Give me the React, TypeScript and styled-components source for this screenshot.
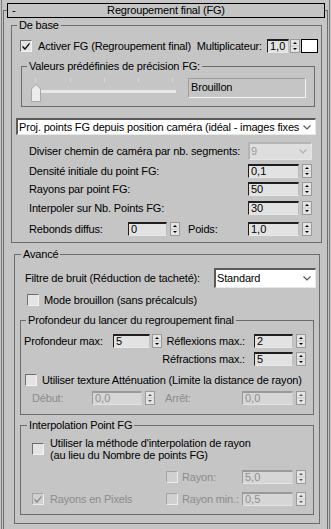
import React from "react";
import styled, { createGlobalStyle } from "styled-components";

const GlobalStyle = createGlobalStyle`
  html, body { margin: 0; padding: 0; background: #c5c5c5; }
  body { font-family: "Liberation Sans", Arial, sans-serif; font-size: 11px; letter-spacing: -0.17px; color: #000; }
  * { box-sizing: border-box; }
`;

const Screen = styled.div`
  width: 331px;
  height: 529px;
  background: #c5c5c5;
  padding: 0 1px;
  overflow: hidden;
`;

const Edge = styled.div`
  height: 100%;
  border-left: 1px solid #7c7c7c;
  border-right: 1px solid #7c7c7c;
  padding: 3px 1px 0;
`;

const Rollout = styled.div`
  height: calc(100% - 7px);
  margin-top: 7px;
  border: 1px solid #6c6c6c;
  border-bottom: none;
`;

const Header = styled.div`
  height: 15px;
  margin: -8px 2px 0 3px;
  border: 1px solid #000;
  background: #c5c5c5;
  display: grid;
  grid-template-columns: 20px 1fr 20px;
  align-items: center;
  line-height: 13px;
`;

const Minus = styled.span`
  padding-left: 4px;
`;

const Title = styled.span`
  text-align: center;
`;

const Group = styled.fieldset<{ $ml: number; $mr: number; $mt: number; $pb: number }>`
  margin: ${(p) => p.$mt}px ${(p) => p.$mr}px 0 ${(p) => p.$ml}px;
  padding: 0 0 ${(p) => p.$pb}px 0;
  border: 1px solid #6c6c6c;
  min-width: 0;
`;

const Legend = styled.legend<{ $ml: number }>`
  margin-left: ${(p) => p.$ml}px;
  padding: 0 2px;
  height: 13px;
  line-height: 13px;
`;

const Row = styled.div<{ $h: number; $mt: number; $pl?: number; $pr?: number }>`
  display: flex;
  align-items: center;
  height: ${(p) => p.$h}px;
  margin-top: ${(p) => p.$mt}px;
  padding-left: ${(p) => p.$pl ?? 0}px;
  padding-right: ${(p) => p.$pr ?? 0}px;
  white-space: nowrap;
`;

const Spacer = styled.div`
  flex: 1;
`;

const Label = styled.span<{ $w?: number; $ml?: number; $dim?: boolean; $right?: boolean; $grow?: boolean; $pr?: number }>`
  display: block;
  ${(p) => (p.$w ? `width: ${p.$w}px; flex: none;` : "")}
  ${(p) => (p.$grow ? "flex: 1;" : "")}
  margin-left: ${(p) => p.$ml ?? 0}px;
  padding-right: ${(p) => p.$pr ?? 0}px;
  color: ${(p) => (p.$dim ? "#8c8c8c" : "#000")};
  text-align: ${(p) => (p.$right ? "right" : "left")};
  line-height: 13px;
  overflow: hidden;
`;

const Field = styled.div<{ $w: number; $ml?: number; $dim?: boolean }>`
  width: ${(p) => p.$w}px;
  height: 14px;
  flex: none;
  margin-left: ${(p) => p.$ml ?? 0}px;
  background: ${(p) => (p.$dim ? "#d6d6d6" : "#e2e2e2")};
  border-style: solid;
  border-width: 2px 1px 1px 1px;
  border-color: ${(p) =>
    p.$dim ? "#9a9a9a #cfcfcf #e4e4e4 #9a9a9a" : "#1e1e1e #bdbdbd #e8e8e8 #1e1e1e"};
  color: ${(p) => (p.$dim ? "#8e8e8e" : "#000")};
  padding-left: 2px;
  line-height: 11px;
  font-size: 11px;
  letter-spacing: 0;
`;

const SpinBox = styled.div<{ $ml: number }>`
  width: 10px;
  height: 14px;
  flex: none;
  margin-left: ${(p) => p.$ml}px;
  display: flex;
`;

const Box = styled.div<{ $ml?: number; $dim?: boolean }>`
  width: 12px;
  height: 12px;
  flex: none;
  margin-left: ${(p) => p.$ml ?? 0}px;
  border: 1px solid;
  border-color: ${(p) => (p.$dim ? "#a4a4a4 #ececec #ececec #a4a4a4" : "#6e6e6e #f2f2f2 #f2f2f2 #6e6e6e")};
  background: ${(p) => (p.$dim ? "#d0d0d0" : "#e4e4e4")};
  display: flex;
  align-items: center;
  justify-content: center;
`;

const Swatch = styled.div`
  width: 17px;
  height: 14px;
  margin-left: 1px;
  flex: none;
  background: #fff;
  border: 1px solid #000;
`;

const Combo = styled.div<{ $w: number; $h: number; $ml?: number; $dim?: boolean }>`
  width: ${(p) => p.$w}px;
  height: ${(p) => p.$h}px;
  flex: none;
  margin-left: ${(p) => p.$ml ?? 0}px;
  display: flex;
  align-items: center;
  background: ${(p) => (p.$dim ? "#dedede" : "#fff")};
  border-style: solid;
  border-width: 2px 1px 1px 2px;
  border-color: ${(p) => (p.$dim ? "#b4b4b4 #e6e6e6 #e6e6e6 #b4b4b4" : "#5a5a5a #e8e8e8 #e8e8e8 #5a5a5a")};
  color: ${(p) => (p.$dim ? "#9a9a9a" : "#000")};
  padding-left: 1px;
  line-height: 13px;
`;

const ComboText = styled.span`
  flex: 1;
  overflow: hidden;
  white-space: nowrap;
`;

const Chevron = styled.svg`
  flex: none;
  margin: 0 4px 0 2px;
`;

const Static = styled.div`
  width: 118px;
  height: 20px;
  margin: 5px 0 0 11px;
  border-style: solid;
  border-width: 1px;
  border-color: #9e9e9e #f4f4f4 #f4f4f4 #9e9e9e;
  padding: 2px 0 0 2px;
  line-height: 13px;
`;

const PresetRow = styled.div`
  display: flex;
  align-items: flex-start;
  height: 33px;
`;

const Slider = styled.div`
  position: relative;
  width: 146px;
  height: 26px;
  margin: 3px 0 0 9px;
  flex: none;
`;

const Tick = styled.div`
  position: absolute;
  top: 2px;
  width: 1px;
  height: 4px;
  background: #dadada;
`;

const Track = styled.div`
  position: absolute;
  left: 5px;
  top: 14px;
  width: 140px;
  height: 3px;
  background: #e8e8e8;
`;

const Thumb = styled.svg`
  position: absolute;
  left: 0;
  top: 8px;
`;

const TwoLine = styled.div`
  margin-left: 6px;
  line-height: 12px;
`;

function Spinner({ ml = 3, dim = false }: { ml?: number; dim?: boolean }) {
  const c = dim ? "#5a5a5a" : "#000";
  return (
    <SpinBox $ml={ml}>
      <svg width="10" height="14" viewBox="0 0 10 14">
        <rect x="0.5" y="0.5" width="9" height="13" fill="#e4e4e4" stroke="#9a9a9a" />
        <line x1="1" y1="7" x2="9" y2="7" stroke="#c8c8c8" />
        <path d="M3 5 L5 3 L7 5 Z" fill={c} />
        <path d="M3 9 L7 9 L5 11 Z" fill={c} />
      </svg>
    </SpinBox>
  );
}

function Check({ checked = false, dim = false, ml }: { checked?: boolean; dim?: boolean; ml?: number }) {
  return (
    <Box $ml={ml} $dim={dim}>
      {checked && (
        <svg width="10" height="10" viewBox="0 0 10 10">
          <path d="M1.5 4.5 L4 7 L8.5 1.5 L8.5 3.5 L4 9 L1.5 6.5 Z" fill={dim ? "#8a8a8a" : "#000"} />
        </svg>
      )}
    </Box>
  );
}

function Chev({ dim = false }: { dim?: boolean }) {
  return (
    <Chevron width="8" height="5" viewBox="0 0 8 5">
      <path d="M0.5 0.5 L4 4 L7.5 0.5" fill="none" stroke={dim ? "#b0b0b0" : "#555"} strokeWidth="1.2" />
    </Chevron>
  );
}

export default function App() {
  return (
    <>
      <GlobalStyle />
      <Screen>
        <Edge>
          <Rollout>
            <Header>
              <Minus>-</Minus>
              <Title>Regroupement final (FG)</Title>
              <span />
            </Header>

            <Group $ml={7} $mr={5} $mt={1} $pb={6}>
              <Legend $ml={5}>De base</Legend>
              <Row $h={14} $mt={7} $pl={8} $pr={3}>
                <Check checked />
                <Label $ml={6}>Activer FG (Regroupement final)</Label>
                <Spacer />
                <Label>Multiplicateur:</Label>
                <Field $w={22} $ml={5}>1,0</Field>
                <Spinner ml={1} />
                <Swatch />
              </Row>

              <Group $ml={9} $mr={6} $mt={7} $pb={0}>
                <Legend $ml={5}>Valeurs prédéfinies de précision FG:</Legend>
                <PresetRow>
                  <Slider>
                    {[4, 39, 73, 107, 141].map((x) => (
                      <Tick key={x} style={{ left: x }} />
                    ))}
                    <Track />
                    <Thumb width="10" height="18" viewBox="0 0 10 18">
                      <path d="M5 0.5 L9.5 5 L9.5 17.5 L0.5 17.5 L0.5 5 Z" fill="#ececec" stroke="#a8a8a8" />
                    </Thumb>
                  </Slider>
                  <Static>Brouillon</Static>
                </PresetRow>
              </Group>

              <Row $h={17} $mt={11} $pl={4}>
                <Combo $w={300} $h={17}>
                  <ComboText>Proj. points FG depuis position caméra (idéal - images fixes</ComboText>
                  <Chev />
                </Combo>
              </Row>

              <Row $h={18} $mt={7} $pl={17} $pr={9}>
                <Label>Diviser chemin de caméra par nb. segments:</Label>
                <Spacer />
                <Combo $w={64} $h={18} $dim>
                  <ComboText>9</ComboText>
                  <Chev dim />
                </Combo>
              </Row>

              <Row $h={14} $mt={4} $pl={17} $pr={9}>
                <Label>Densité initiale du point FG:</Label>
                <Spacer />
                <Field $w={51}>0,1</Field>
                <Spinner />
              </Row>
              <Row $h={14} $mt={4} $pl={17} $pr={9}>
                <Label>Rayons par point FG:</Label>
                <Spacer />
                <Field $w={51}>50</Field>
                <Spinner />
              </Row>
              <Row $h={14} $mt={5} $pl={17} $pr={9}>
                <Label>Interpoler sur Nb. Points FG:</Label>
                <Spacer />
                <Field $w={51}>30</Field>
                <Spinner />
              </Row>
              <Row $h={14} $mt={7} $pl={17} $pr={9}>
                <Label $w={99}>Rebonds diffus:</Label>
                <Field $w={39}>0</Field>
                <Spinner />
                <Label $ml={8}>Poids:</Label>
                <Spacer />
                <Field $w={51}>1,0</Field>
                <Spinner />
              </Row>
            </Group>

            <Group $ml={10} $mr={7} $mt={5} $pb={8}>
              <Legend $ml={6}>Avancé</Legend>
              <Row $h={20} $mt={7} $pl={10} $pr={3}>
                <Label>Filtre de bruit (Réduction de tacheté):</Label>
                <Spacer />
                <Combo $w={102} $h={20}>
                  <ComboText>Standard</ComboText>
                  <Chev />
                </Combo>
              </Row>
              <Row $h={12} $mt={6} $pl={12}>
                <Check />
                <Label $ml={5}>Mode brouillon (sans précalculs)</Label>
              </Row>

              <Group $ml={5} $mr={5} $mt={8} $pb={9}>
                <Legend $ml={5}>Profondeur du lancer du regroupement final</Legend>
                <Row $h={14} $mt={7} $pl={3} $pr={7}>
                  <Label $w={89}>Profondeur max:</Label>
                  <Field $w={37}>5</Field>
                  <Spinner ml={2} />
                  <Label $right $grow $pr={9}>Réflexions max.:</Label>
                  <Field $w={39}>2</Field>
                  <Spinner />
                </Row>
                <Row $h={14} $mt={4} $pl={3} $pr={7}>
                  <Spacer />
                  <Label $right $pr={9}>Réfractions max.:</Label>
                  <Field $w={39}>5</Field>
                  <Spinner />
                </Row>
                <Row $h={12} $mt={8} $pl={4}>
                  <Check />
                  <Label $ml={5}>Utiliser texture Atténuation (Limite la distance de rayon)</Label>
                </Row>
                <Row $h={14} $mt={5} $pl={11} $pr={7}>
                  <Label $w={60} $dim>Début:</Label>
                  <Field $w={50} $dim>0,0</Field>
                  <Spinner dim />
                  <Label $ml={10} $dim>Arrêt:</Label>
                  <Spacer />
                  <Field $w={51} $dim>0,0</Field>
                  <Spinner dim />
                </Row>
              </Group>

              <Group $ml={5} $mr={5} $mt={4} $pb={8}>
                <Legend $ml={6}>Interpolation Point FG</Legend>
                <Row $h={24} $mt={5} $pl={11}>
                  <Check />
                  <TwoLine>
                    Utiliser la méthode d'interpolation de rayon
                    <br />
                    (au lieu du Nombre de points FG)
                  </TwoLine>
                </Row>
                <Row $h={14} $mt={9} $pl={11} $pr={7}>
                  <Spacer />
                  <Check dim />
                  <Label $w={60} $ml={4} $dim>Rayon:</Label>
                  <Field $w={51} $dim>5,0</Field>
                  <Spinner dim />
                </Row>
                <Row $h={14} $mt={8} $pl={11} $pr={7}>
                  <Check checked dim />
                  <Label $ml={6} $dim>Rayons en Pixels</Label>
                  <Spacer />
                  <Check dim />
                  <Label $w={60} $ml={4} $dim>Rayon min.:</Label>
                  <Field $w={51} $dim>0,5</Field>
                  <Spinner dim />
                </Row>
              </Group>
            </Group>
          </Rollout>
        </Edge>
      </Screen>
    </>
  );
}
